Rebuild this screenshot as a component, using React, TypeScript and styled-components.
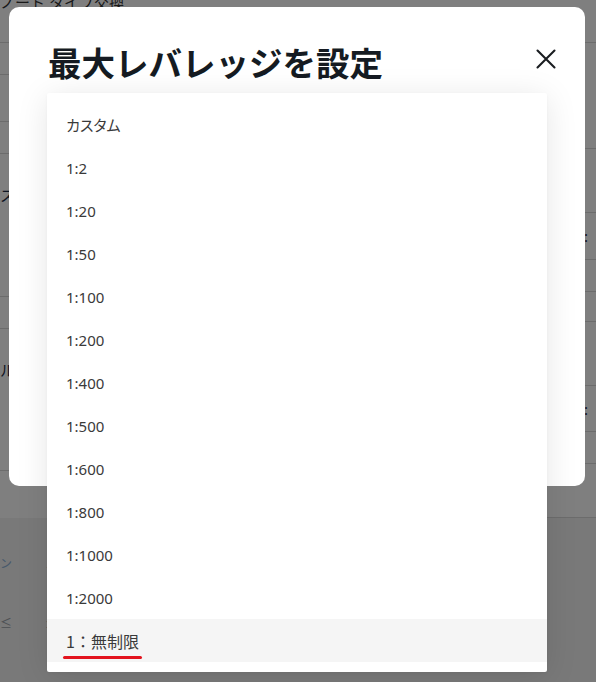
import styled, { createGlobalStyle } from "styled-components";

const GlobalStyle = createGlobalStyle`
  html, body {
    margin: 0;
    padding: 0;
  }
  body {
    width: 596px;
    height: 682px;
    overflow: hidden;
    background: #ffffff;
    font-family: "Noto Sans", "Noto Sans CJK JP", sans-serif;
  }
`;

const Screen = styled.div`
  position: relative;
  width: 596px;
  height: 682px;
  overflow: hidden;
`;

/* page behind the dialog */
const Page = styled.div`
  display: flex;
  flex-direction: column;
  height: 100%;
`;

const Columns = styled.div`
  display: grid;
  grid-template-columns: 1fr 1fr;
  height: 518px;
`;

const Column = styled.div`
  display: flex;
  flex-direction: column;
`;

const Row = styled.div<{ h: number }>`
  height: ${({ h }) => h}px;
  flex: none;
  box-sizing: border-box;
  border-bottom: 1px solid #d9d9d9;
  display: flex;
  align-items: flex-start;
  padding-top: 31px;
  font-size: 15px;
  line-height: 20px;
  color: #1c2a44;
  white-space: nowrap;
  overflow: hidden;
`;

const ValueRow = styled(Row)`
  align-items: center;
  justify-content: flex-end;
  padding: 0 8px 0 0;
`;

const TopLabel = styled.span`
  margin-top: -39px;
  font-size: 15px;
  color: #333;
`;

const Footer = styled.div`
  flex: 1;
  background: #f3f3f3;
  display: grid;
  grid-template-columns: 45px 1fr 60px;
  grid-template-rows: 60px 1fr;
  font-size: 12px;
  color: #9aa0a8;
`;

const FootCell = styled.span<{ tint?: string }>`
  padding-top: 36px;
  color: ${({ tint }) => tint || "#9aa0a8"};
`;

const Overlay = styled.div`
  position: absolute;
  inset: 0;
  background: rgba(0, 0, 0, 0.5);
  display: flex;
  align-items: flex-start;
  padding: 7px 0 0 9px;
`;

const Modal = styled.div`
  position: relative;
  width: 576px;
  height: 479px;
  box-sizing: border-box;
  background: #ffffff;
  border-radius: 10px;
  padding: 32px 29px 0 39px;
`;

const Header = styled.div`
  display: flex;
  align-items: center;
  justify-content: space-between;
`;

const Title = styled.h2`
  margin: 0;
  font-family: "Noto Sans CJK JP", sans-serif;
  font-size: 33.5px;
  line-height: 46px;
  font-weight: 700;
  color: #151b22;
`;

const CloseButton = styled.button`
  background: none;
  border: none;
  padding: 0;
  margin-top: -6px;
  width: 20px;
  height: 20px;
  cursor: pointer;
  display: flex;
`;

const Menu = styled.ul`
  position: absolute;
  top: 86px;
  left: 38px;
  width: 500px;
  margin: 0;
  padding: 10px 0;
  list-style: none;
  background: #ffffff;
  border-radius: 2px;
  box-shadow: 0 4px 32px rgba(0, 0, 0, 0.1), 0 1px 3px rgba(0, 0, 0, 0.04);
`;

const Item = styled.li<{ active?: boolean }>`
  height: 43px;
  display: flex;
  align-items: center;
  padding: 0 19px;
  font-size: 15px;
  color: #3a3a3a;
  font-feature-settings: "palt";
  background: ${({ active }) => (active ? "#f5f5f5" : "transparent")};
  cursor: pointer;
`;

const Marked = styled.span`
  position: relative;
  font-family: "Noto Sans CJK JP", sans-serif;
  font-size: 16px;
  font-feature-settings: normal;
  &::after {
    content: "";
    position: absolute;
    left: -3px;
    right: -3px;
    bottom: -6px;
    height: 3px;
    border-radius: 2px;
    background: #e3141e;
  }
`;

const leftRows = [
  { h: 43, text: "" },
  { h: 29, text: "" },
  { h: 47, text: "" },
  { h: 30, text: "" },
  { h: 143, text: "スート" },
  { h: 30, text: "" },
  { h: 142, text: "ルール" },
  { h: 54, text: "" },
];

const rightRows = [
  { h: 43, text: "" },
  { h: 106, text: "" },
  { h: 64, text: "" },
  { h: 47, text: "設定:" },
  { h: 32, text: "" },
  { h: 30, text: "" },
  { h: 64, text: "" },
  { h: 46, text: "設定:" },
  { h: 32, text: "" },
  { h: 54, text: "" },
];

const options = [
  "カスタム",
  "1:2",
  "1:20",
  "1:50",
  "1:100",
  "1:200",
  "1:400",
  "1:500",
  "1:600",
  "1:800",
  "1:1000",
  "1:2000",
];

export default function App() {
  return (
    <Screen>
      <GlobalStyle />
      <Page>
        <Columns>
          <Column>
            {leftRows.map((r, i) => (
              <Row key={i} h={r.h}>
                {i === 0 ? <TopLabel>ノート タイプ交換</TopLabel> : r.text}
              </Row>
            ))}
          </Column>
          <Column>
            {rightRows.map((r, i) => (
              <ValueRow key={i} h={r.h}>
                {r.text}
              </ValueRow>
            ))}
          </Column>
        </Columns>
        <Footer>
          <FootCell tint="#8fb4d8">ン</FootCell>
          <FootCell>ノ</FootCell>
          <FootCell tint="#e0a36a">1</FootCell>
          <FootCell>≤</FootCell>
          <FootCell>≤</FootCell>
          <FootCell tint="#8fb4d8">≣</FootCell>
        </Footer>
      </Page>

      <Overlay>
        <Modal>
          <Header>
            <Title>最大レバレッジを設定</Title>
            <CloseButton aria-label="閉じる">
              <svg width="20" height="20" viewBox="0 0 20 20">
                <path
                  d="M1.5 1.5 L18.5 18.5 M18.5 1.5 L1.5 18.5"
                  stroke="#1a1d21"
                  strokeWidth="2.1"
                  strokeLinecap="round"
                />
              </svg>
            </CloseButton>
          </Header>
          <Menu>
            {options.map((o) => (
              <Item key={o}>{o}</Item>
            ))}
            <Item active>
              <Marked>1：無制限</Marked>
            </Item>
          </Menu>
        </Modal>
      </Overlay>
    </Screen>
  );
}
